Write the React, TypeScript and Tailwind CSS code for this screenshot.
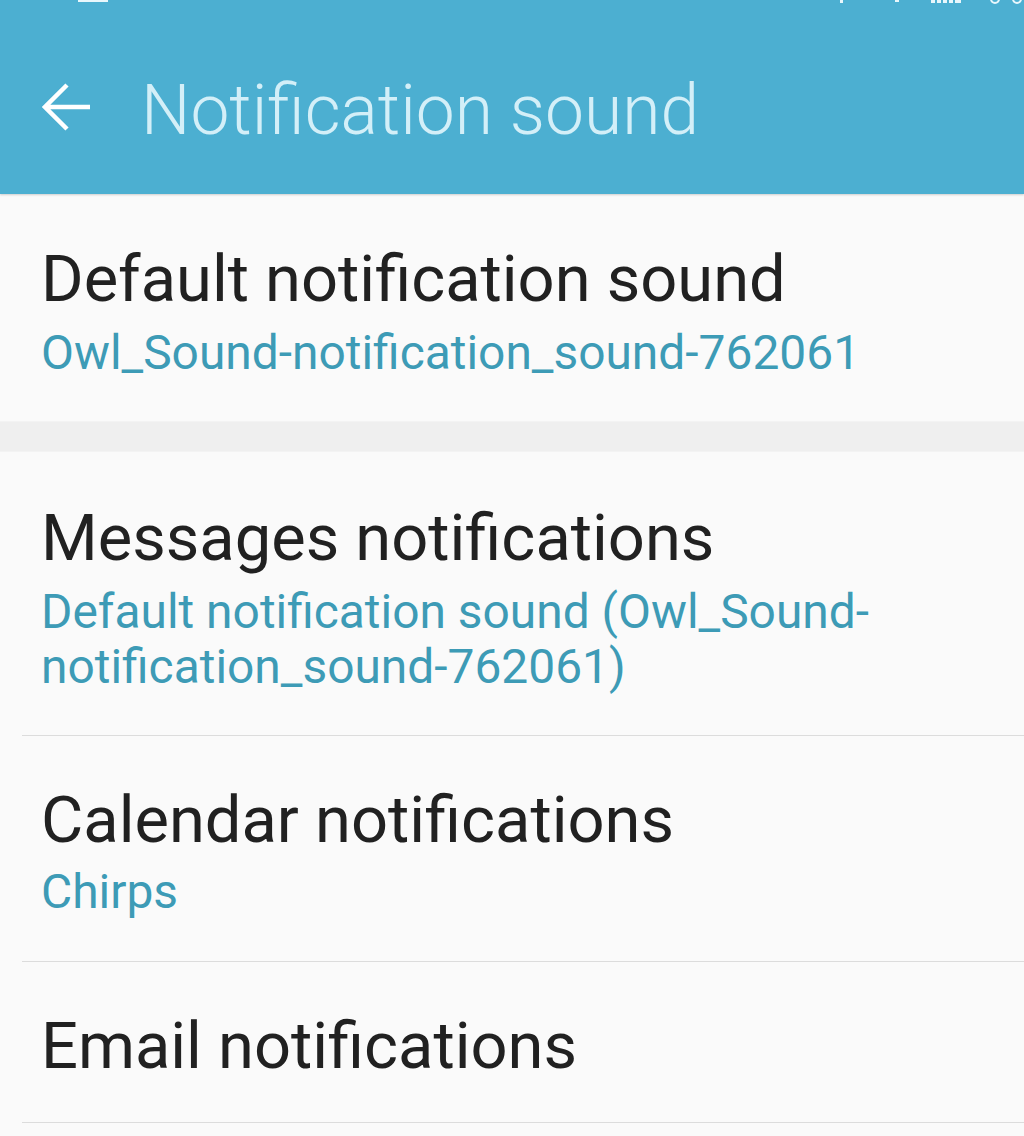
export default function App() {
  const title = "text-[65px] leading-[66px] text-[#212121]";
  const sub = "text-[47.9px] leading-[55px] text-[#3d9bb6]";
  return (
    <div className="w-[1024px] min-h-[1136px] overflow-hidden bg-[#fafafa] font-['Roboto',sans-serif]">
      <header className="relative z-10 h-[194px] bg-[#4cafd1] shadow-[0_1px_2px_rgba(0,0,0,0.18)]">
        <div className="absolute left-[78px] top-0 h-[2px] w-[30px] bg-[#e8f7fc]" />
        <div className="absolute left-[840px] top-0 h-[3px] w-[3px] bg-[#e8f7fc]" />
        <div className="absolute left-[895px] top-0 h-[2px] w-[4px] bg-[#e8f7fc]" />
        <div className="absolute left-[931px] top-0 flex h-[3px] gap-[2px]">
          <div className="h-[3px] w-[4px] bg-[#e8f7fc]" />
          <div className="h-[3px] w-[4px] bg-[#e8f7fc]" />
          <div className="h-[3px] w-[4px] bg-[#e8f7fc]" />
          <div className="h-[3px] w-[4px] bg-[#e8f7fc]" />
          <div className="h-[3px] w-[6px] bg-[#e8f7fc]" />
        </div>
        <div className="absolute left-[990px] top-[-6px] h-[10px] w-[10px] rounded-full border-[2px] border-[#e8f7fc]" />
        <div className="absolute left-[1012px] top-[-6px] h-[10px] w-[10px] rounded-full border-[2px] border-[#e8f7fc]" />
        <div className="flex items-start pl-[42px] pt-[76px]">
          <svg className="mt-[7px] shrink-0" width="48" height="48" viewBox="0 0 48 48" fill="none">
            <path d="M3 24 H48 M25 2 L3 24 L25 46" stroke="#ffffff" strokeWidth="4.5" strokeLinecap="butt" strokeLinejoin="miter" />
          </svg>
          <h1 className="ml-[51px] text-[69.5px] leading-[70px] font-light text-[#d3eff8]">Notification sound</h1>
        </div>
      </header>

      <div className="pl-[41px] pt-[52px] pb-[40px]">
        <div className={title}>Default notification sound</div>
        <div className={`mt-[14px] ${sub}`}>Owl_Sound-notification_sound-762061</div>
      </div>

      <div className="h-[31px] bg-[#efefef] border-y border-[#f3f3f3]" />

      <div className="pl-[41px] pt-[53px] pb-[40px]">
        <div className={title}>Messages notifications</div>
        <div className={`mt-[14px] ${sub}`}>
          Default notification sound (Owl_Sound-
          <br />
          notification_sound-762061)
        </div>
      </div>
      <div className="ml-[22px] h-px bg-[#dcdcdc]" />

      <div className="pl-[41px] pt-[51px] pb-[41px]">
        <div className={title}>Calendar notifications</div>
        <div className={`mt-[12px] ${sub}`}>Chirps</div>
      </div>
      <div className="ml-[22px] h-px bg-[#dcdcdc]" />

      <div className="pl-[41px] pt-[51px] pb-[43px]">
        <div className={title}>Email notifications</div>
      </div>
      <div className="ml-[22px] h-px bg-[#dcdcdc]" />
    </div>
  );
}
